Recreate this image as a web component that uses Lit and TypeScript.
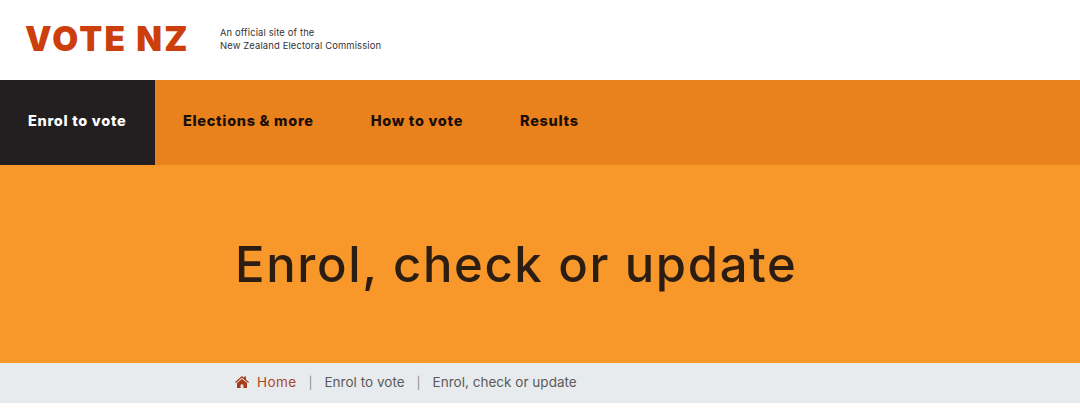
import { LitElement, css, html } from "lit";
import { customElement } from "lit/decorators.js";

@customElement("app-root")
export class AppRoot extends LitElement {
    static override styles = css`
        :host {
            display: block;
            width: 1080px;
            height: 409px;
            background: #fff;
            font-family: Inter, "Liberation Sans", sans-serif;
            overflow: hidden;
        }

        .header {
            height: 80px;
            display: flex;
            align-items: center;
            padding-left: 25px;
            box-sizing: border-box;
        }

        .logo {
            width: 195px;
            font-size: 33.5px;
            font-weight: 900;
            color: #cc3f0c;
            letter-spacing: 2.2px;
            line-height: 1;
            white-space: nowrap;
        }

        .tagline {
            font-size: 9.4px;
            line-height: 13px;
            color: #333;
            letter-spacing: 0.15px;
            padding-bottom: 3px;
        }

        .nav {
            height: 85px;
            background: #e9811c;
            display: flex;
            align-items: center;
        }

        .nav-item {
            font-size: 14.5px;
            font-weight: 800;
            color: #1a0f0a;
            letter-spacing: 0.7px;
            white-space: nowrap;
            margin-left: 57px;
            padding-bottom: 4px;
        }

        .nav-item.first {
            margin-left: 28px;
        }

        .active {
            width: 155px;
            height: 100%;
            box-sizing: border-box;
            padding: 0 0 4px 28px;
            display: flex;
            align-items: center;
            background: #231f20;
            color: #fff;
            font-size: 14.5px;
            font-weight: 800;
            letter-spacing: 0.7px;
            white-space: nowrap;
        }

        .hero {
            height: 198px;
            background: #f9982a;
            padding-left: 235px;
            display: flex;
            align-items: center;
        }

        .hero h1 {
            margin: 0;
            font-size: 49px;
            font-weight: 550;
            color: #2b1d12;
            letter-spacing: 1.65px;
            white-space: nowrap;
        }

        .crumbs {
            height: 40px;
            background: #e8ebed;
            padding: 0 0 2px 235px;
            box-sizing: border-box;
            display: flex;
            align-items: center;
            font-size: 13.5px;
            letter-spacing: 0.02px;
            color: #5a5a5a;
            white-space: nowrap;
        }

        .crumbs svg {
            width: 14px;
            height: 12px;
            margin-right: 8px;
            fill: #a83a1a;
        }

        .home {
            color: #a8452a;
            letter-spacing: 0.4px;
        }

        .sep {
            margin: 0 12px;
            color: #8a8a8a;
            font-size: 12px;
        }
    `;

    override render() {
        return html`
            <div class="header">
                <div class="logo">VOTE NZ</div>
                <div class="tagline">
                    An official site of the<br />
                    New Zealand Electoral Commission
                </div>
            </div>
            <div class="nav">
                <div class="active">Enrol to vote</div>
                <div class="nav-item first">Elections &amp; more</div>
                <div class="nav-item">How to vote</div>
                <div class="nav-item">Results</div>
            </div>
            <div class="hero"><h1>Enrol, check or update</h1></div>
            <div class="crumbs">
                <svg viewBox="0 0 14 12">
                    <path d="M7 0 L9.2 1.9 V0.6 H11 V3.5 L14 6.1 L13.2 7 L7 1.7 L0.8 7 L0 6.1 Z M7 2.9 L12 7.1 V12 H8.4 V8.4 H5.6 V12 H2 V7.1 Z" />
                </svg>
                <span class="home">Home</span>
                <span class="sep">|</span>
                <span>Enrol to vote</span>
                <span class="sep">|</span>
                <span>Enrol, check or update</span>
            </div>
        `;
    }
}
